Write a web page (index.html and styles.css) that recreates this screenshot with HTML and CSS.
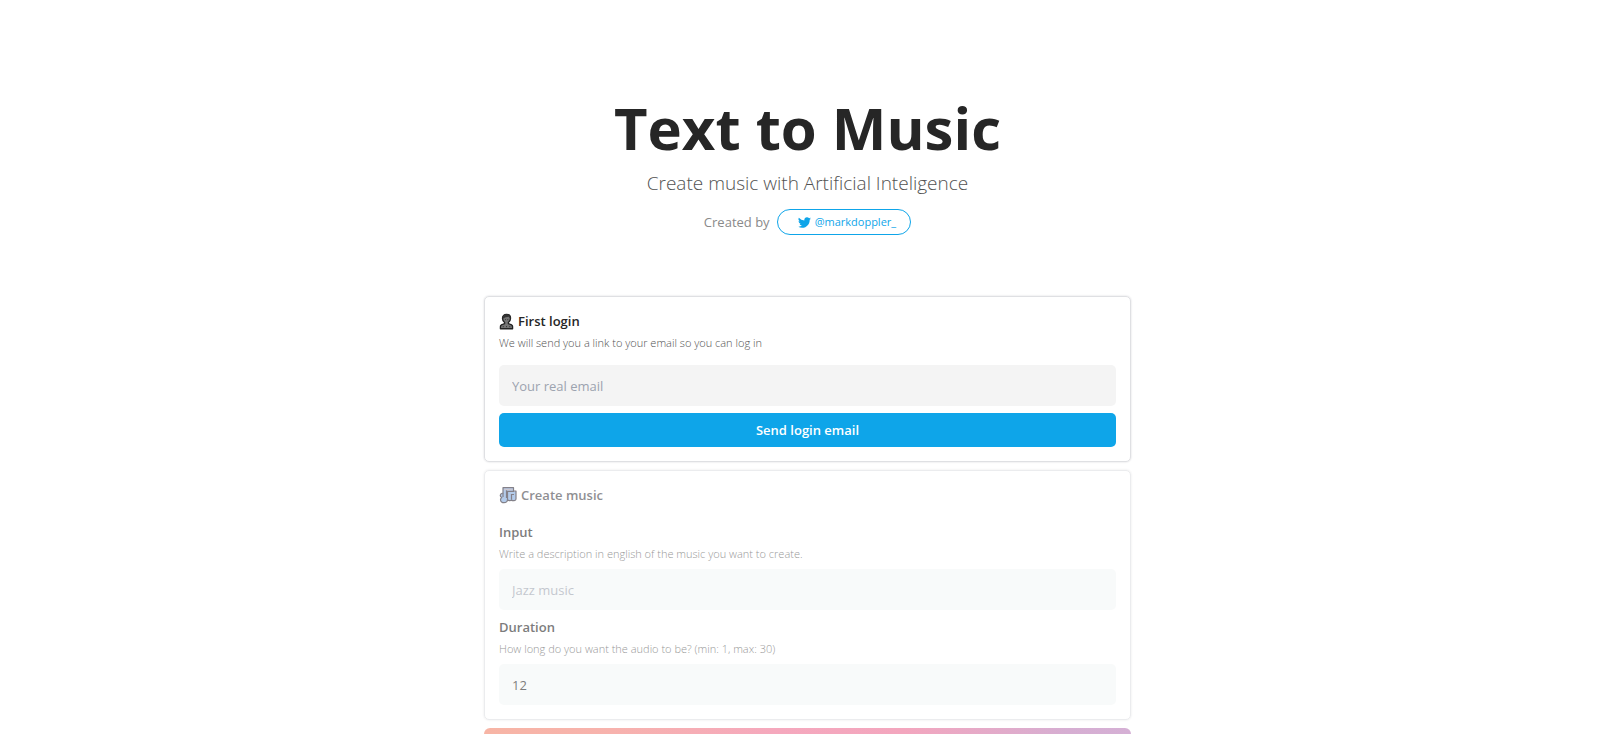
FILE: index.html
```html
<!DOCTYPE html>
<html lang="en">
<head>
<meta charset="utf-8">
<meta name="viewport" content="width=device-width, initial-scale=1">
<title>Text to Music</title>
<link rel="stylesheet" href="styles.css">
</head>
<body>
<main class="page">
  <header class="hero">
    <h1 class="hero-title">Text to Music</h1>
    <p class="hero-subtitle">Create music with Artificial Inteligence</p>
    <div class="credit">
      <span class="credit-label">Created by</span>
      <a class="handle" href="#">
        <svg class="bird" viewBox="0 0 24 24" aria-hidden="true"><path fill="currentColor" d="M23.95 4.57a10 10 0 0 1-2.82.77 4.96 4.96 0 0 0 2.16-2.72c-.95.55-2 .95-3.13 1.18a4.92 4.92 0 0 0-8.38 4.48A13.98 13.98 0 0 1 1.64 3.16a4.92 4.92 0 0 0 1.52 6.57 4.9 4.9 0 0 1-2.23-.61v.06a4.92 4.92 0 0 0 3.95 4.83 5 5 0 0 1-2.21.08 4.94 4.94 0 0 0 4.6 3.42A9.87 9.87 0 0 1 0 19.54a13.99 13.99 0 0 0 7.55 2.21c9.05 0 14-7.5 14-13.98 0-.21 0-.42-.02-.63a9.94 9.94 0 0 0 2.46-2.55z"/></svg>
        <span>@markdoppler_</span>
      </a>
    </div>
  </header>

  <form class="card">
    <h2 class="card-title">
      <svg class="emoji-person" viewBox="0 0 16 18" aria-hidden="true">
        <path d="M1.5 16.7v-2.2c0-1.5 1.2-2.4 3-2.8l1.500-.5V10C4.500 9 3.700 7.500 3.700 5.500 3.700 3 5.500 1.300 8 1.300s4.300 1.700 4.300 4.200c0 2-.8 3.500-2.300 4.500v1.200l1.500.5c1.800.4 3 1.300 3 2.800v2.200z" fill="#747474" stroke="#222" stroke-width="1.400" stroke-linejoin="round"/>
        <path d="M4 6C3.300 2.500 5.500 1.200 8 1.200s5 1.500 4 4.800L10.500 4 7 4.500z" fill="#333"/>
        <path d="M6.500 7h.8M9 7h.8M4 14.500h1M7.500 14.500h1M11 14.500h1" stroke="#262626" stroke-width="1"/>
      </svg>
      First login
    </h2>
    <label class="hint" for="email">We will send you a link to your email so you can log in</label>
    <input class="field field-email" id="email" type="email" placeholder="Your real email">
    <button class="submit" type="button">Send login email</button>
  </form>

  <form class="card card-muted">
    <h2 class="card-title">
      <svg class="emoji-notes" viewBox="0 0 18 18" aria-hidden="true">
        <path d="M4 1.700h10.500V5H17v8c0 1.800-3.500 2.300-4.500.8-1 1.400-3.500 1-4-.3-.2 4.300-7 4-7 .3 0-1.200.5-1.800 1.300-2.300C.5 10.500.8 7.500 4 7z" fill="#82a9dd" stroke="#332f3c" stroke-width="1.200" stroke-linejoin="round"/>
        <path d="M4 7v4M8.500 13.500V5.300H15M7.500 4v8M12.500 13.500V8.500H15" fill="none" stroke="#332f3c" stroke-width="1.200"/>
        <path d="M5 3.500h8.500" stroke="#a9a3b4" stroke-width="1.500"/>
      </svg>
      Create music
    </h2>
    <div class="group group-first">
      <label class="label" for="prompt">Input</label>
      <p class="hint">Write a description in english of the music you want to create.</p>
      <input class="field" id="prompt" type="text" placeholder="Jazz music">
    </div>
    <div class="group">
      <label class="label" for="duration">Duration</label>
      <p class="hint">How long do you want the audio to be? (min: 1, max: 30)</p>
      <input class="field" id="duration" type="text" inputmode="numeric" value="12">
    </div>
  </form>

  <button class="generate" type="button" aria-label="Generate"></button>
</main>
</body>
</html>
```
FILE: styles.css
```css
* {
  box-sizing: border-box;
}

html {
  overflow: hidden;
}

body {
  margin: 0;
  padding-left: 15px;
  background: #fff;
  color: #262626;
  font-family: "Segoe UI", "Open Sans", "Noto Sans", sans-serif;
  font-size: 13px;
  line-height: 20px;
}

h1, h2, p {
  margin: 0;
}

.page {
  display: flex;
  flex-direction: column;
  gap: 8px;
  max-width: 679px;
  margin: 0 auto;
  padding: 96px 16px 0;
}

.hero {
  display: flex;
  flex-direction: column;
  align-items: center;
  margin-bottom: 53px;
}

.hero-title {
  font-size: 58px;
  font-weight: 700;
  line-height: 64px;
}

.hero-subtitle {
  margin-top: 9px;
  color: #525252;
  font-size: 19px;
  font-weight: 300;
  line-height: 28px;
}

.credit {
  display: flex;
  align-items: center;
  gap: 7px;
  margin-top: 12px;
  color: #8a8a8a;
}

.handle {
  display: flex;
  align-items: center;
  gap: 4px;
  padding: 2px 14px 2px 20px;
  border: 1px solid #0ea5e9;
  border-radius: 13px;
  color: #0ea5e9;
  font-size: 11px;
  text-decoration: none;
}

.bird {
  width: 13px;
  height: 13px;
}

.card {
  display: flex;
  flex-direction: column;
  padding: 14px;
  border: 1px solid #dfe0e3;
  border-radius: 5px;
  box-shadow: 0 0 2px #d4d4d8;
}

.card-muted {
  opacity: 0.6;
}

.card-title {
  display: flex;
  align-items: center;
  gap: 4px;
  font-size: 13px;
  font-weight: 600;
  line-height: 20px;
}

.card-muted .card-title {
  color: #45454b;
}

.emoji-person {
  width: 15px;
  height: 17px;
}

.emoji-notes {
  width: 18px;
  height: 18px;
}

.hint {
  color: #525252;
  font-size: 11px;
  font-weight: 300;
  line-height: 24px;
}

.field {
  width: 100%;
  height: 41px;
  padding: 0 13px;
  border: 0;
  border-radius: 5px;
  background: #f4f4f4;
  color: #262626;
  font: inherit;
}

.field::placeholder {
  color: #9ca3af;
  opacity: 1;
}

.field-email {
  margin: 10px 0 7px;
}

.submit {
  height: 34px;
  border: 0;
  border-radius: 5px;
  background: #0ea5e9;
  color: #fff;
  font: inherit;
  font-weight: 600;
}

.group {
  display: flex;
  flex-direction: column;
  margin-top: 7px;
}

.group-first {
  margin-top: 17px;
}

.label {
  font-weight: 600;
}

.card-muted .hint {
  padding-bottom: 3px;
}

.card-muted .field {
  background: #f5f8f7;
}

.generate {
  height: 42px;
  border: 0;
  border-radius: 6px;
  background: linear-gradient(90deg, #f7b5a5 0%, #f7b2ad 20%, #f5a8bd 45%, #f3a6be 65%, #d6aed2 90%, #d5b0d5 100%);
}
```
